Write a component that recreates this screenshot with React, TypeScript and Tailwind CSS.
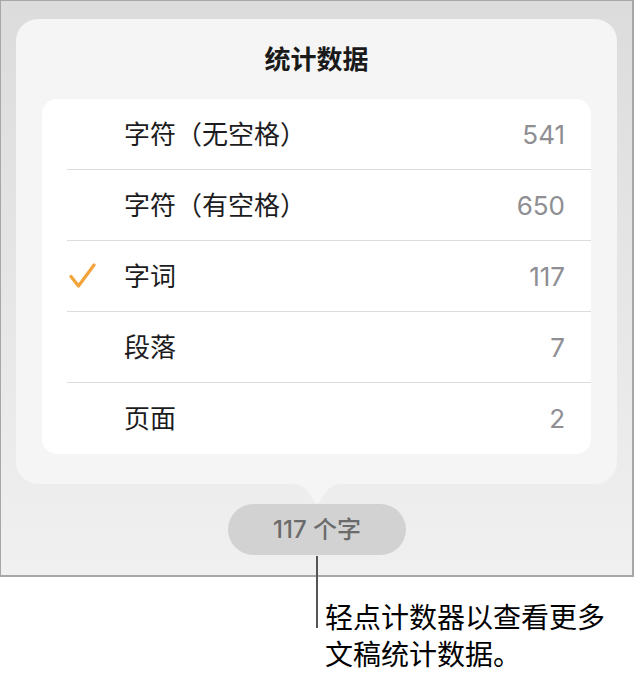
import React from 'react';

interface StatRow {
  label: string;
  value: string;
  checked?: boolean;
}

const rows: StatRow[] = [
  { label: '字符（无空格）', value: '541' },
  { label: '字符（有空格）', value: '650' },
  { label: '字词', value: '117', checked: true },
  { label: '段落', value: '7' },
  { label: '页面', value: '2' },
];

const font = { fontFamily: '"Inter", "Noto Sans CJK SC", sans-serif' };

function CheckMark() {
  return (
    <svg width="28" height="26" viewBox="0 0 28 26" className="ml-[1px]">
      <path
        d="M3 13.5 L10.5 23 L26 2"
        fill="none"
        stroke="#f2a33a"
        strokeWidth="3.2"
        strokeLinecap="round"
        strokeLinejoin="round"
      />
    </svg>
  );
}

export default function App() {
  return (
    <div className="relative w-[635px] h-[676px] bg-white" style={font}>
      {/* screen frame */}
      <div className="w-[634px] h-[577px] border-t border-l border-r-2 border-b-2 border-[#a7a7a7] bg-gradient-to-b from-[#dcdcdc] to-[#f0f0f0] flex flex-col items-center pt-[18px]">
        {/* popover */}
        <div className="w-[601px] h-[465px] rounded-[22px] bg-[#f5f5f5] flex flex-col items-center pt-[24px] px-[26px]">
          <div className="text-[26px] leading-[34px] font-bold text-[#1a1a1a] mb-[22px]">统计数据</div>
          <div className="w-full bg-white rounded-[15px] overflow-hidden">
            {rows.map((row, i) => (
              <div key={row.label} className="pl-[25px]">
                <div
                  className={`h-[71px] flex items-center ${
                    i < rows.length - 1 ? 'border-b border-[#dcdcdc]' : ''
                  }`}
                >
                  <div className="w-[57px] flex items-center">{row.checked && <CheckMark />}</div>
                  <span className="flex-1 text-[26px] text-[#1c1c1e]">{row.label}</span>
                  <span className="pr-[26px] text-[26px] text-[#8e8e93]">{row.value}</span>
                </div>
              </div>
            ))}
          </div>
        </div>

        {/* pointer */}
        <svg width="52" height="20" viewBox="0 0 52 20" className="block ml-[1px]">
          <path d="M0 0 C10 0 13 3 17 8 L24 18.5 Q26 20.5 28 18.5 L35 8 C39 3 42 0 52 0 Z" fill="#f5f5f5" />
        </svg>

        {/* word count pill */}
        <div className="w-[178px] h-[51px] rounded-full bg-[#d2d2d2] flex items-center justify-center text-[24px] font-medium text-[#6b6b6b] ml-[1px]">
          117 个字
        </div>
      </div>

      {/* callout line */}
      <div className="absolute left-[316px] top-[556px] w-[2px] h-[72px] bg-[#555555]" />

      {/* callout text */}
      <div className="pl-[325px] mt-[23px] text-[28px] leading-[37px] text-black">
        轻点计数器以查看更多
        <br />
        文稿统计数据。
      </div>
    </div>
  );
}
